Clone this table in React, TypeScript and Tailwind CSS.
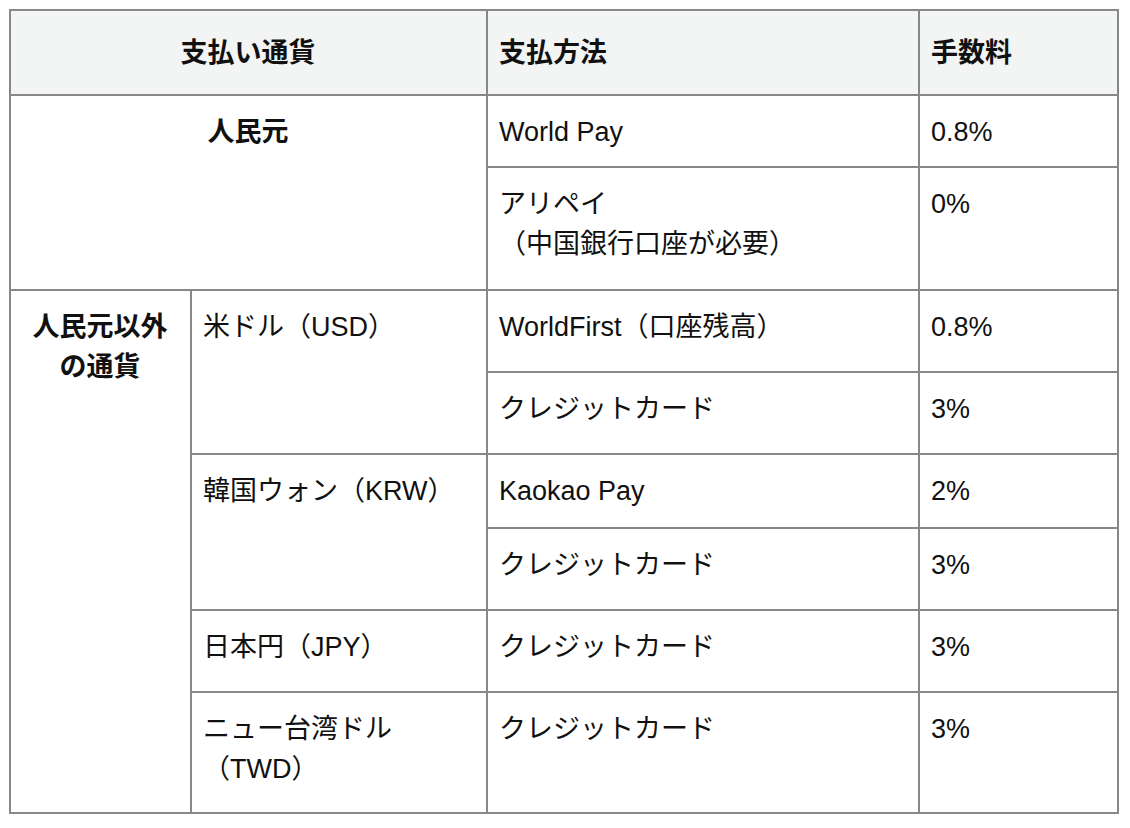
import React from "react"

const cell = "border-2 border-[#888888] pl-[11px] pr-3 pt-4 align-top"
const head = "border-2 border-[#888888] pl-[11px] pr-3 align-middle font-bold bg-[#f3f4f4]"

export default function App() {
    return (
        <div className="min-h-screen bg-white pl-[9px] pt-[9px]">
            <table
                className="table-fixed border-collapse text-[27px] leading-[40px] text-[#111111] w-[1108px]"
                style={{ fontFamily: '"Liberation Sans", "Noto Sans CJK JP", sans-serif' }}
            >
                <colgroup>
                    <col className="w-[181px]" />
                    <col className="w-[296px]" />
                    <col className="w-[432px]" />
                    <col className="w-[199px]" />
                </colgroup>
                <thead>
                    <tr className="h-[85px]">
                        <th colSpan={2} className={`${head} text-center`}>支払い通貨</th>
                        <th className={`${head} text-left`}>支払方法</th>
                        <th className={`${head} text-left`}>手数料</th>
                    </tr>
                </thead>
                <tbody>
                    <tr className="h-[72px]">
                        <td rowSpan={2} colSpan={2} className={`${cell} text-center font-bold`}>人民元</td>
                        <td className={cell}>World Pay</td>
                        <td className={cell}>0.8%</td>
                    </tr>
                    <tr className="h-[123px]">
                        <td className={cell}>
                            アリペイ
                            <br />
                            （中国銀行口座が必要）
                        </td>
                        <td className={cell}>0%</td>
                    </tr>
                    <tr className="h-[82px]">
                        <td rowSpan={6} className={`${cell} text-center font-bold`}>人民元以外の通貨</td>
                        <td rowSpan={2} className={cell}>米ドル（USD）</td>
                        <td className={cell}>WorldFirst（口座残高）</td>
                        <td className={cell}>0.8%</td>
                    </tr>
                    <tr className="h-[82px]">
                        <td className={cell}>クレジットカード</td>
                        <td className={cell}>3%</td>
                    </tr>
                    <tr className="h-[74px]">
                        <td rowSpan={2} className={cell}>韓国ウォン（KRW）</td>
                        <td className={cell}>Kaokao Pay</td>
                        <td className={cell}>2%</td>
                    </tr>
                    <tr className="h-[82px]">
                        <td className={cell}>クレジットカード</td>
                        <td className={cell}>3%</td>
                    </tr>
                    <tr className="h-[82px]">
                        <td className={cell}>日本円（JPY）</td>
                        <td className={cell}>クレジットカード</td>
                        <td className={cell}>3%</td>
                    </tr>
                    <tr className="h-[121px]">
                        <td className={cell}>ニュー台湾ドル（TWD）</td>
                        <td className={cell}>クレジットカード</td>
                        <td className={cell}>3%</td>
                    </tr>
                </tbody>
            </table>
        </div>
    )
}
